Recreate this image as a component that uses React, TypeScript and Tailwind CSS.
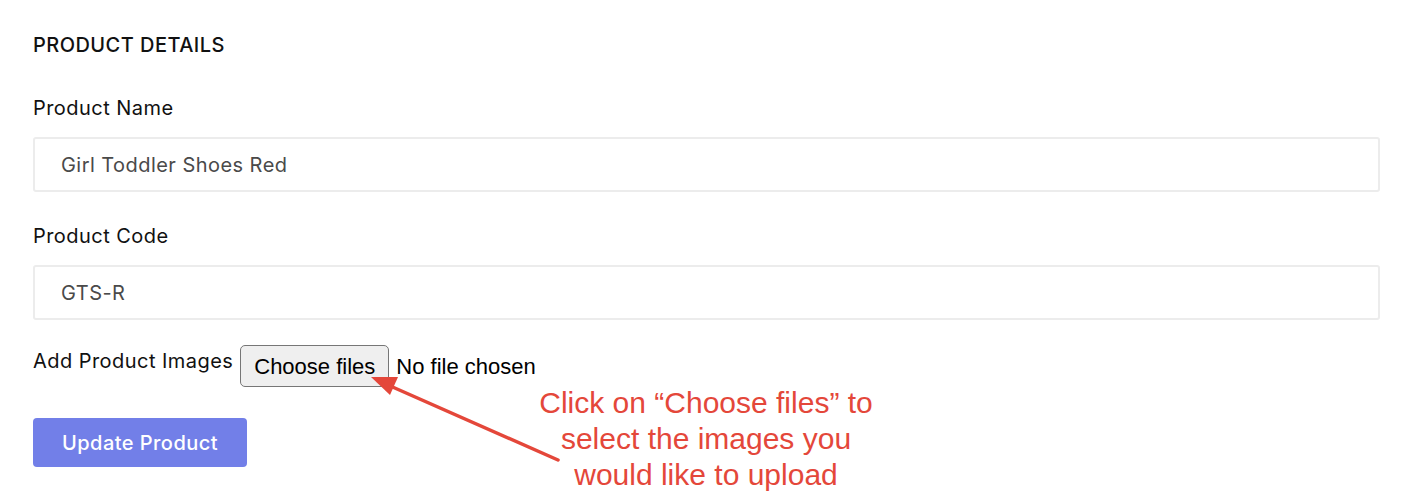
export default function App() {
  return (
    <div className="relative min-h-[496px] w-full bg-white px-[33px] pt-[33px] font-['Inter',sans-serif] text-[#111] tracking-[0.45px]">
      <h2 className="text-[20px] leading-[24px] font-medium">PRODUCT DETAILS</h2>

      <label className="mt-[39px] block text-[20px] leading-[24px]">Product Name</label>
      <input
        type="text"
        defaultValue="Girl Toddler Shoes Red"
        className="mt-[17px] block h-[55px] w-[1347px] rounded-[3px] border-2 border-[#ececec] px-[26px] text-[20px] tracking-[0.45px] text-[#4a4a4a] outline-none"
      />

      <label className="mt-[32px] block text-[20px] leading-[24px]">Product Code</label>
      <input
        type="text"
        defaultValue="GTS-R"
        className="mt-[17px] block h-[55px] w-[1347px] rounded-[3px] border-2 border-[#ececec] px-[26px] text-[20px] tracking-[0.45px] text-[#4a4a4a] outline-none"
      />

      <div className="mt-[27px] flex items-start">
        <span className="mt-[2px] text-[20px] leading-[24px]">Add Product Images</span>
        <div className="ml-[7px] mt-[-2px] flex items-center font-['Liberation_Sans',sans-serif] text-[22px] tracking-normal text-black">
          <span className="flex h-[42px] items-center rounded-[5px] border border-[#767676] bg-[#efefef] px-[13px]">
            Choose files
          </span>
          <span className="ml-[7px]">No file chosen</span>
        </div>
      </div>

      <button className="mt-[31px] flex h-[49px] w-[214px] items-center justify-center rounded-[4px] bg-[#727fe8] text-[20px] font-medium tracking-[0.45px] text-white">
        Update Product
      </button>

      <p className="absolute left-[456px] top-[385px] w-[500px] text-center font-['Liberation_Sans',sans-serif] text-[30px] leading-[36px] tracking-normal text-[#e4473a]">
        Click on “Choose files” to
        <br />
        select the images you
        <br />
        would like to upload
      </p>

      <svg className="absolute left-0 top-0" width="1414" height="496" viewBox="0 0 1414 496">
        <line x1="558" y1="460" x2="388" y2="385" stroke="#e4473a" strokeWidth="3.5" strokeLinecap="round" />
        <polygon points="371,377 398,377 390,395" fill="#e4473a" />
      </svg>
    </div>
  );
}
